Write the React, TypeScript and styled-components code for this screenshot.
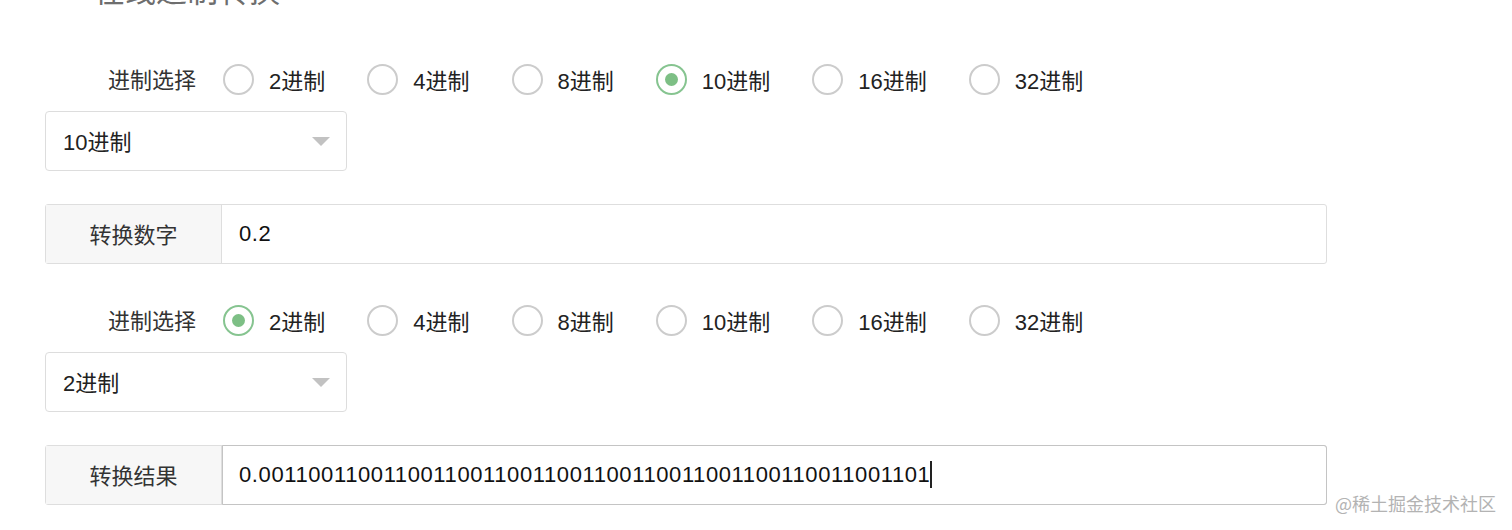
import React, { useState } from "react";
import styled, { createGlobalStyle } from "styled-components";

const GlobalStyle = createGlobalStyle`
  html, body {
    margin: 0;
    padding: 0;
    background: #ffffff;
    overflow: hidden;
  }
  body {
    font-family: "Liberation Sans", "Noto Sans CJK SC", sans-serif;
    color: #222;
  }
`;

const Page = styled.div`
  position: relative;
  width: 1512px;
  height: 530px;
  overflow: hidden;
`;

const Content = styled.div`
  width: 1282px;
  padding-left: 45px;
`;

const Title = styled.h1`
  margin: -24px 0 0 49px;
  height: 32px;
  line-height: 32px;
  font-size: 31px;
  font-weight: normal;
  color: #6e6e6e;
`;

const RadioRow = styled.div<{ $top: number }>`
  display: flex;
  align-items: center;
  height: 40px;
  margin-top: ${(p) => p.$top}px;
  padding-left: 63px;
  font-size: 22px;
`;

const RowLabel = styled.span`
  color: #333;
  margin-right: 27px;
  padding-bottom: 2px;
`;

const Option = styled.label`
  display: flex;
  align-items: center;
  gap: 15px;
  margin-right: 42px;
  cursor: pointer;
  color: #222;
`;

const OptionText = styled.span`
  padding-bottom: 1px;
`;

const Circle = styled.span<{ $checked: boolean }>`
  box-sizing: border-box;
  width: 31px;
  height: 31px;
  border-radius: 50%;
  border: 2px solid ${(p) => (p.$checked ? "#86c490" : "#cccccc")};
  display: flex;
  align-items: center;
  justify-content: center;
  &::after {
    content: "";
    width: 13px;
    height: 13px;
    border-radius: 50%;
    background: #7dbf85;
    display: ${(p) => (p.$checked ? "block" : "none")};
  }
`;

const Select = styled.div`
  box-sizing: border-box;
  margin-top: 12px;
  width: 302px;
  height: 60px;
  border: 1px solid #dddddd;
  border-radius: 4px;
  display: flex;
  align-items: center;
  justify-content: space-between;
  padding: 0 16px 3px 17px;
  font-size: 22px;
  color: #222;
`;

const Arrow = styled.span`
  width: 0;
  height: 0;
  margin-top: 3px;
  border-left: 9px solid transparent;
  border-right: 9px solid transparent;
  border-top: 9px solid #c2c2c2;
`;

const InputGroup = styled.div<{ $mb?: number }>`
  box-sizing: border-box;
  display: flex;
  margin-top: 33px;
  margin-bottom: ${(p) => p.$mb ?? 0}px;
  width: 1282px;
  height: 60px;
  border: 1px solid #dedede;
  border-radius: 3px;
  font-size: 22px;
`;

const Addon = styled.div`
  width: 175px;
  flex-shrink: 0;
  background: #f7f7f7;
  border-right: 1px solid #dedede;
  display: flex;
  align-items: center;
  justify-content: center;
  padding-bottom: 2px;
  color: #333;
`;

const Field = styled.div<{ $focus?: boolean }>`
  flex: 1;
  display: flex;
  align-items: center;
  padding-left: 16px;
  padding-bottom: 1px;
  letter-spacing: 0.6px;
  color: #111;
  margin: -1px -1px -1px 0;
  border: 1px solid ${(p) => (p.$focus ? "#c4c4c4" : "transparent")};
  border-radius: 0 3px 3px 0;
`;

const Caret = styled.span`
  display: inline-block;
  width: 2px;
  height: 27px;
  background: #222;
`;

const Watermark = styled.div`
  position: absolute;
  right: 16px;
  bottom: 14px;
  font-size: 18px;
  color: #b3b3b3;
  font-family: "Noto Sans CJK SC", sans-serif;
`;

const bases = [2, 4, 8, 10, 16, 32];

type RadioGroupProps = {
  value: number;
  onChange: (v: number) => void;
  top: number;
};

const RadioGroup: React.FC<RadioGroupProps> = ({ value, onChange, top }) => (
  <RadioRow $top={top}>
    <RowLabel>进制选择</RowLabel>
    {bases.map((b) => (
      <Option key={b} onClick={() => onChange(b)}>
        <Circle $checked={value === b} />
        <OptionText>{b}进制</OptionText>
      </Option>
    ))}
  </RadioRow>
);

const App: React.FC = () => {
  const [from, setFrom] = useState(10);
  const [to, setTo] = useState(2);
  const input = "0.2";
  const result = parseFloat(input).toString(to);

  return (
    <Page>
      <GlobalStyle />
      <Content>
        <Title>在线进制转换</Title>
        <RadioGroup value={from} onChange={setFrom} top={51} />
        <Select>
          {from}进制
          <Arrow />
        </Select>
        <InputGroup $mb={36}>
          <Addon>转换数字</Addon>
          <Field>{input}</Field>
        </InputGroup>
        <RadioGroup value={to} onChange={setTo} top={0} />
        <Select>
          {to}进制
          <Arrow />
        </Select>
        <InputGroup>
          <Addon>转换结果</Addon>
          <Field $focus>
            {result}
            <Caret />
          </Field>
        </InputGroup>
      </Content>
      <Watermark>@稀土掘金技术社区</Watermark>
    </Page>
  );
};

export default App;
